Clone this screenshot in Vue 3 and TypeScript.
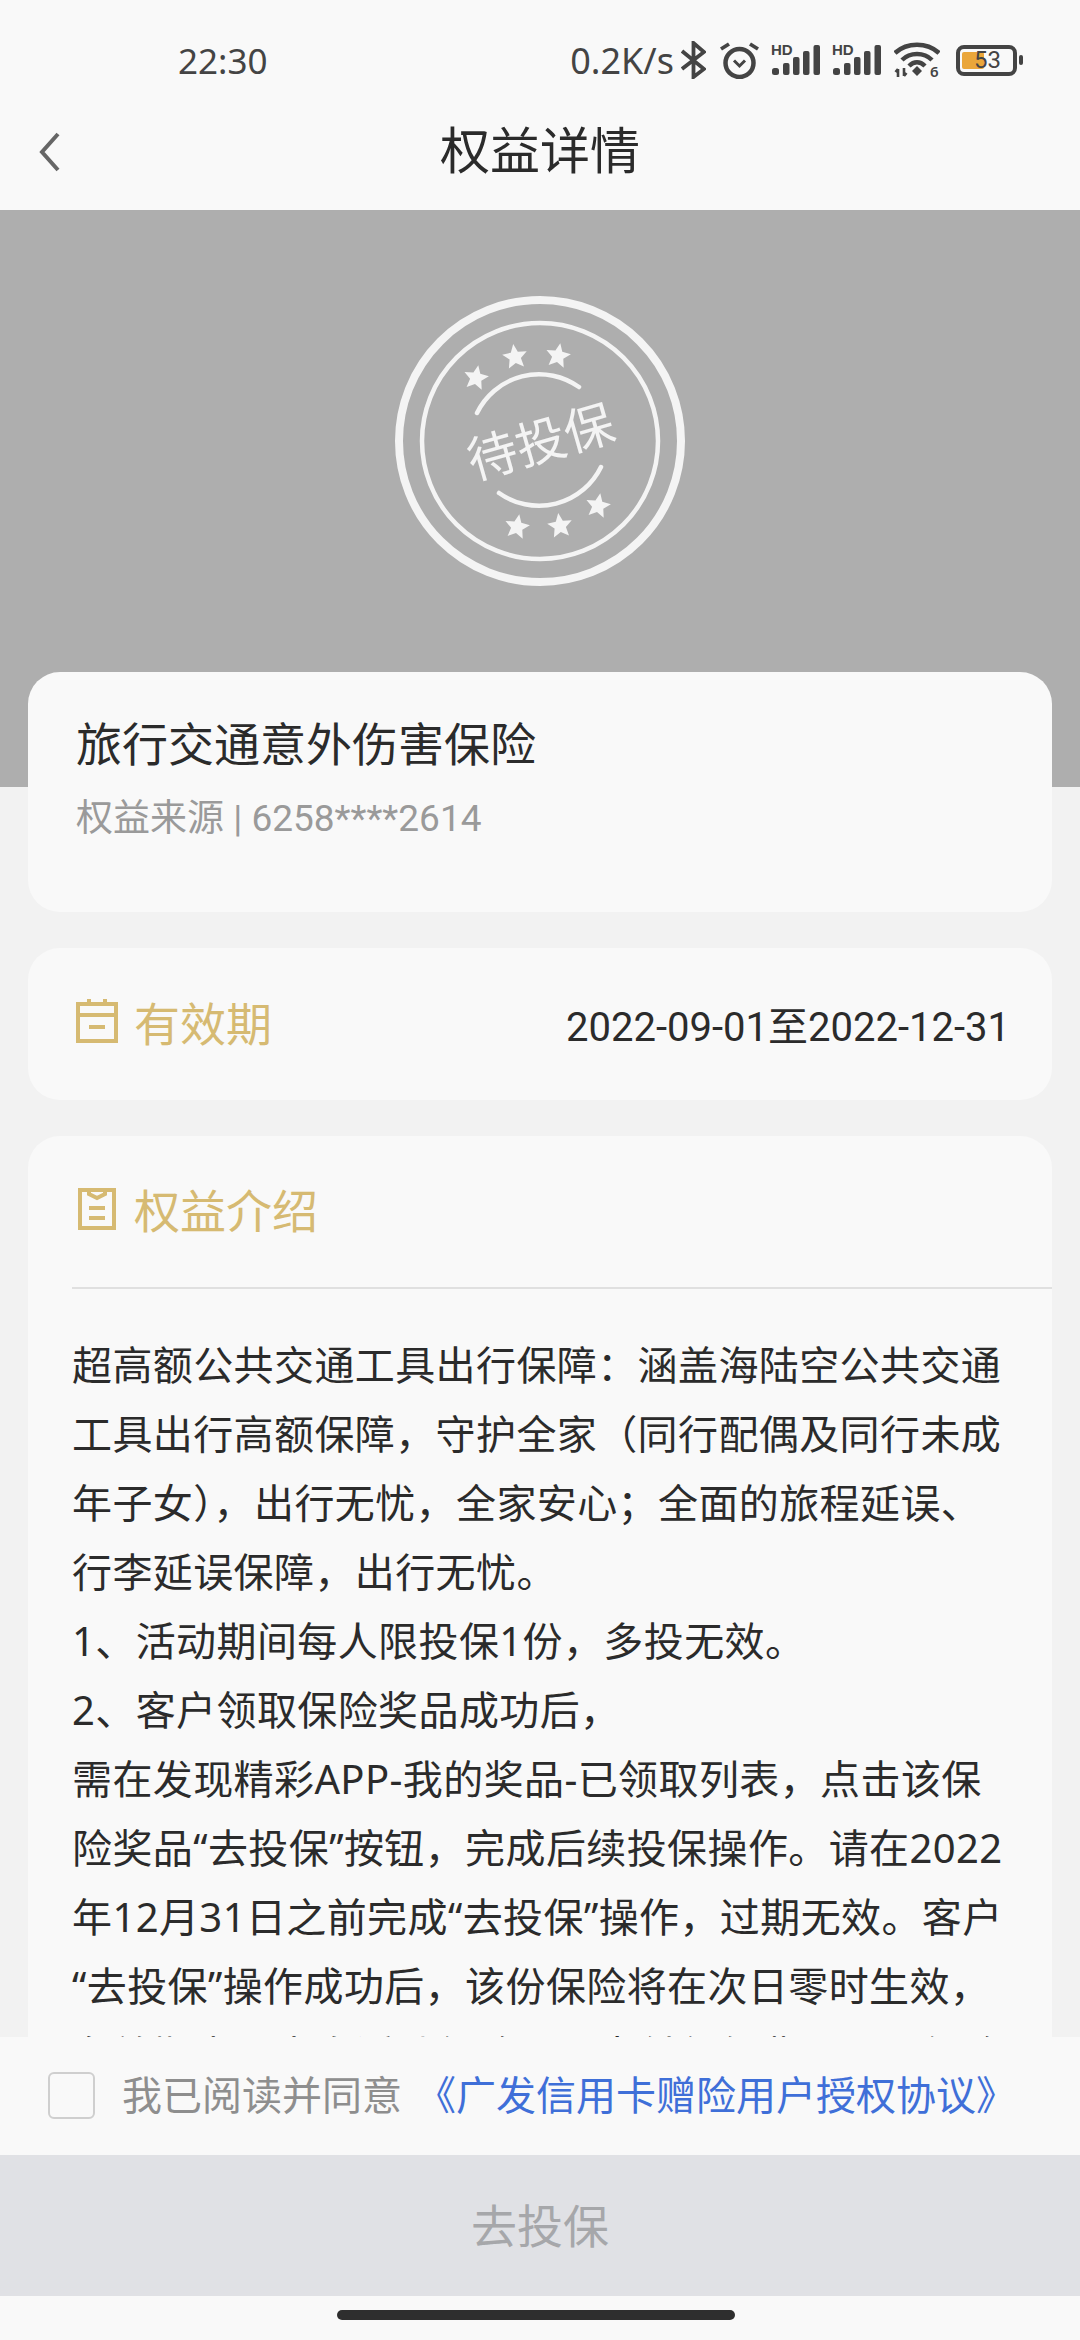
<template>
  <div class="page">
    <div class="status-bar">
      <span class="clock">22:30</span>
      <div class="status-right">
        <span class="speed">0.2K/s</span>
        <svg class="ic-bt" width="25" height="38" viewBox="0 0 25 38" fill="none" stroke="#444" stroke-width="3.800">
          <path d="M1 10 L23 28 L12.500 36 V2 L23 11 L1 28" />
        </svg>
        <svg class="ic-alarm" width="39" height="37" viewBox="0 0 39 37" fill="none" stroke="#444">
          <circle cx="19.500" cy="21" r="14" stroke-width="4.500" />
          <path d="M14 18.500 L19.500 24 L25 18.500" stroke-width="3" />
          <path d="M1 7 L9 2 M38 7 L30 2" stroke-width="3.800" />
        </svg>
        <div v-for="n in 2" :key="n" class="signal">
          <span class="hd">HD</span>
          <svg width="49" height="30" viewBox="0 0 49 30" fill="#444">
            <rect x="1" y="23" width="7" height="7" rx="2.500" />
            <rect x="12" y="18" width="6.500" height="12" rx="2" />
            <rect x="22" y="12" width="6.500" height="18" rx="2" />
            <rect x="32" y="6" width="6.500" height="24" rx="2" />
            <rect x="42.500" y="0" width="6.500" height="30" rx="2" />
          </svg>
        </div>
        <svg class="ic-wifi" width="46" height="44" viewBox="0 -4 46 44" fill="none" stroke="#444" stroke-width="4.500">
          <path d="M1 11 C13 0 33 0 45 11" />
          <path d="M8 18 C16 10 30 10 38 18" />
          <path d="M15 24 C20 19 26 19 31 24" />
          <path d="M23 24 L28 29 L23 34 L18 29 Z" fill="#444" stroke="none" />
          <path d="M4 27 V35 M4 27 L1.500 30 M10 26 V34 M10 34 L12.500 31" stroke-width="2.600" />
          <text x="36" y="35" class="wifi-six">6</text>
        </svg>
        <div class="battery">
          <div class="battery-body">
            <span class="battery-fill"></span>
            <span class="battery-num">53</span>
          </div>
          <span class="battery-tip"></span>
        </div>
      </div>
    </div>

    <div class="nav">
      <svg class="back" width="24" height="40" viewBox="0 0 24 40" fill="none" stroke="#666" stroke-width="4">
        <path d="M20 2 L4 20 L20 38" />
      </svg>
      <span class="nav-title">权益详情</span>
    </div>

    <div class="scroll">
      <div class="hero">
        <svg class="stamp" width="300" height="300" viewBox="0 0 300 300" fill="none" stroke="#f4f4f4">
          <circle cx="150" cy="150" r="141" stroke-width="8" />
          <circle cx="150" cy="150" r="118" stroke-width="4.500" />
          <path d="M87 122 A69 69 0 0 1 189 96" stroke-width="4.500" stroke-linecap="round" />
          <path d="M109 202 A69 69 0 0 0 211 176" stroke-width="4.500" stroke-linecap="round" />
          <polygon v-for="s in stars" :key="s.x" :points="starPoints(s.x, s.y, s.rot)" fill="#f4f4f4" stroke="none" />
          <text x="151" y="169" class="stamp-text" transform="rotate(-16 151 152)">待投保</text>
        </svg>
      </div>

      <div class="cards">
        <div class="card card-head">
          <div class="product">旅行交通意外伤害保险</div>
          <div class="source">权益来源 | 6258****2614</div>
        </div>

        <div class="card card-date">
          <div class="label">
            <svg width="42" height="44" viewBox="0 0 42 44" fill="none" stroke="#d6ba72" stroke-width="4">
              <path d="M2 5 H40 V42 H2 Z M2 16 H40 M13 0 V5 M29 0 V5 M13 28 H29" />
            </svg>
            <span>有效期</span>
          </div>
          <span class="date">2022-09-01至2022-12-31</span>
        </div>

        <div class="card card-intro">
          <div class="label intro-label">
            <svg width="42" height="44" viewBox="0 0 42 44" fill="none" stroke="#d6ba72" stroke-width="4">
              <path d="M4 4 H38 V42 H4 Z M13 2 V8 L21 12 L29 8 V2 M13 22 H29 M13 32 H29" />
            </svg>
            <span>权益介绍</span>
          </div>
          <div class="divider"></div>
          <div class="intro-text">
            <div v-for="line in introLines" :key="line" class="intro-line">{{ line }}</div>
          </div>
        </div>
      </div>
    </div>

    <div class="agree">
      <span class="checkbox"></span>
      <span class="agree-text">我已阅读并同意</span>
      <span class="agree-link">《广发信用卡赠险用户授权协议》</span>
    </div>
    <div class="submit">去投保</div>
    <div class="home-row"><span class="home-pill"></span></div>
  </div>
</template>

<script setup lang="ts">
const stars = [
  { x: 86, y: 87, rot: 10 },
  { x: 125, y: 66, rot: -8 },
  { x: 168, y: 65, rot: 10 },
  { x: 127, y: 236, rot: 10 },
  { x: 170, y: 235, rot: -8 },
  { x: 208, y: 215, rot: 10 },
]

function starPoints(cx: number, cy: number, rot: number): string {
  const pts: string[] = []
  for (let i = 0; i < 10; i++) {
    const r = i % 2 === 0 ? 13 : 6
    const a = ((-90 + rot + i * 36) * Math.PI) / 180
    pts.push(`${(cx + r * Math.cos(a)).toFixed(1)},${(cy + r * Math.sin(a)).toFixed(1)}`)
  }
  return pts.join(' ')
}

const introLines = [
  '超高额公共交通工具出行保障：涵盖海陆空公共交通',
  '工具出行高额保障，守护全家（同行配偶及同行未成',
  '年子女），出行无忧，全家安心；全面的旅程延误、',
  '行李延误保障，出行无忧。',
  '1、活动期间每人限投保1份，多投无效。',
  '2、客户领取保险奖品成功后，',
  '需在发现精彩APP-我的奖品-已领取列表，点击该保',
  '险奖品“去投保”按钮，完成后续投保操作。请在2022',
  '年12月31日之前完成“去投保”操作，过期无效。客户',
  '“去投保”操作成功后，该份保险将在次日零时生效，',
  '有效期内，本次活动保险不需支付任何费用，且保险',
]
</script>

<style>
html,
body {
  margin: 0;
  background: #f2f2f2;
}
</style>

<style scoped>
.page {
  width: 1080px;
  height: 2340px;
  display: flex;
  flex-direction: column;
  overflow: hidden;
  background: #f2f2f2;
  font-family: "Noto Sans", "Noto Sans CJK SC", sans-serif;
  color: #2b2b2b;
}

.status-bar {
  height: 120px;
  flex: none;
  background: #f9f9f9;
  display: flex;
  justify-content: space-between;
  align-items: center;
  box-sizing: border-box;
  padding: 0 57px 0 178px;
  color: #444;
}
.clock {
  font-size: 35px;
}
.status-right {
  display: flex;
  align-items: center;
}
.speed {
  font-size: 36px;
}
.ic-bt {
  margin-left: 7px;
}
.ic-alarm {
  margin-left: 14px;
}
.signal {
  position: relative;
  width: 49px;
  height: 30px;
  margin-left: 12px;
}
.signal svg {
  display: block;
}
.hd {
  position: absolute;
  left: 0;
  top: -2px;
  font-family: "Liberation Sans", sans-serif;
  font-size: 15px;
  line-height: 14px;
  font-weight: 700;
  color: #444;
}
.ic-wifi {
  margin-left: 13px;
}
.wifi-six {
  font-size: 15px;
  font-weight: 600;
  fill: #444;
  stroke: none;
}
.battery {
  display: flex;
  align-items: center;
  margin-left: 16px;
}
.battery-body {
  position: relative;
  width: 53px;
  height: 23px;
  border: 4px solid #444;
  border-radius: 8px;
}
.battery-fill {
  position: absolute;
  left: 2px;
  top: 3px;
  bottom: 3px;
  width: 22px;
  background: #eaa63a;
  border-radius: 2px;
}
.battery-num {
  position: absolute;
  left: 14px;
  top: 0;
  font-family: Roboto, sans-serif;
  font-size: 24px;
  line-height: 23px;
  color: #444;
}
.battery-tip {
  width: 4px;
  height: 10px;
  margin-left: 2px;
  background: #444;
  border-radius: 2px;
}

.nav {
  position: relative;
  flex: none;
  height: 90px;
  background: #f9f9f9;
  display: flex;
  align-items: center;
  justify-content: center;
}
.back {
  position: absolute;
  left: 38px;
  top: 12px;
}
.nav-title {
  font-size: 50px;
  line-height: 64px;
  margin-top: -30px;
  color: #2b2b2b;
}

.scroll {
  flex: 1;
  min-height: 0;
  overflow: hidden;
  position: relative;
}
.hero {
  height: 577px;
  background: #aeaeae;
  display: flex;
  justify-content: center;
  align-items: flex-start;
  padding-top: 81px;
  box-sizing: border-box;
}
.stamp-text {
  font-size: 50px;
  font-weight: 400;
  fill: #f4f4f4;
  stroke: none;
  text-anchor: middle;
}

.cards {
  position: relative;
  margin-top: -115px;
  padding: 0 28px;
  display: flex;
  flex-direction: column;
  gap: 36px;
}
.card {
  background: #f9f9f9;
  border-radius: 32px;
  box-sizing: border-box;
}
.card-head {
  height: 240px;
  padding: 41px 48px 0;
}
.product {
  font-size: 46px;
  line-height: 60px;
  color: #2b2b2b;
}
.source {
  margin-top: 22px;
  font-family: Roboto, "Noto Sans CJK SC", sans-serif;
  font-size: 37px;
  line-height: 48px;
  color: #9a9a9a;
}
.card-date {
  height: 152px;
  padding: 0 42px 0 48px;
  display: flex;
  align-items: center;
  justify-content: space-between;
}
.label {
  display: flex;
  align-items: center;
  gap: 16px;
  box-sizing: border-box;
  padding-bottom: 6px;
  font-size: 46px;
  color: #d6ba72;
}
.date {
  font-family: Roboto, "Noto Sans CJK SC", sans-serif;
  font-size: 40px;
  color: #2b2b2b;
}
.card-intro {
  padding-left: 44px;
}
.intro-label {
  height: 151px;
  padding-left: 4px;
  padding-bottom: 8px;
}
.divider {
  height: 2px;
  background: #e0e0e0;
}
.intro-text {
  padding-top: 41px;
}
.intro-line {
  font-size: 40px;
  letter-spacing: 0.4px;
  line-height: 69px;
  white-space: nowrap;
  color: #2b2b2b;
}

.agree {
  flex: none;
  height: 118px;
  background: #f9f9f9;
  display: flex;
  align-items: center;
  padding-left: 48px;
}
.checkbox {
  width: 47px;
  height: 47px;
  box-sizing: border-box;
  border: 2px solid #cfcfcf;
  border-radius: 6px;
  margin-right: 27px;
  margin-top: -2px;
}
.agree-text {
  margin-top: -6px;
  font-size: 40px;
  color: #8e8e8e;
}
.agree-link {
  margin-top: -6px;
  margin-left: 14px;
  font-size: 40px;
  color: #3f6fd8;
}
.submit {
  flex: none;
  height: 141px;
  box-sizing: border-box;
  padding-bottom: 6px;
  background: #e0e1e5;
  color: #a6a7aa;
  font-size: 46px;
  display: flex;
  align-items: center;
  justify-content: center;
}
.home-row {
  flex: none;
  height: 44px;
  background: #f9f9f9;
  display: flex;
  justify-content: center;
  padding: 14px 8px 0 0;
  box-sizing: border-box;
}
.home-pill {
  width: 398px;
  height: 10px;
  border-radius: 5px;
  background: #2e2e2e;
}
</style>
